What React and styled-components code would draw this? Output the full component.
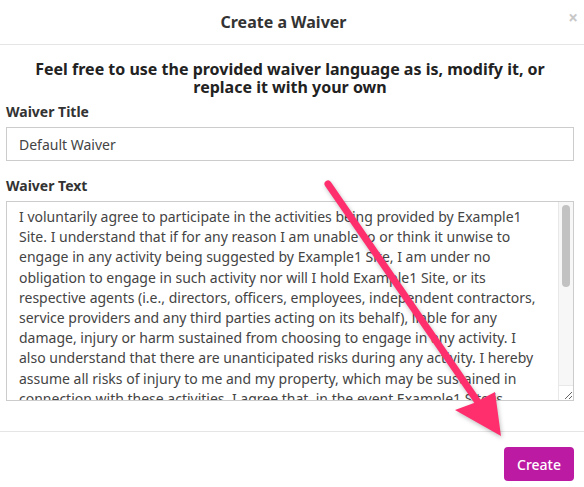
import React from 'react';
import styled, { createGlobalStyle } from 'styled-components';

const GlobalStyle = createGlobalStyle`
    html, body {
        margin: 0;
        padding: 0;
        background: #fff;
    }
    body {
        font-family: "Noto Sans", "Open Sans", sans-serif;
        color: #333;
    }
`;

const WAIVER_TEXT = 'I voluntarily agree to participate in the activities being provided by Example1 Site. I understand that if for any reason I am unable to or think it unwise to engage in any activity being suggested by Example1 Site, I am under no obligation to engage in such activity nor will I hold Example1 Site, or its respective agents (i.e., directors, officers, employees, independent contractors, service providers and any third parties acting on its behalf), liable for any damage, injury or harm sustained from choosing to engage in any activity. I also understand that there are unanticipated risks during any activity. I hereby assume all risks of injury to me and my property, which may be sustained in connection with these activities. I agree that, in the event Example1 Site is found liable for any damages, such liability shall be limited to the amount paid for the activity.';

const Modal = styled.div`
    position: relative;
    width: 584px;
    height: 487px;
    display: flex;
    flex-direction: column;
    background: #fff;
    overflow: hidden;
`;

const Header = styled.div`
    position: relative;
    height: 45px;
    display: flex;
    align-items: center;
    justify-content: center;
    padding-right: 17px;
    border-bottom: 1px solid #e5e5e5;
    box-sizing: border-box;
`;

const Title = styled.h4`
    margin: 0;
    font-size: 16px;
    font-weight: 700;
    color: #333;
`;

const Close = styled.span`
    position: absolute;
    right: 6px;
    top: 9px;
    font-size: 17px;
    font-weight: 700;
    color: #c8c8c8;
    line-height: 1;
`;

const Body = styled.div`
    flex: 1;
    padding: 15px 10px 0 6px;
    display: flex;
    flex-direction: column;
`;

const Lead = styled.h3`
    margin: 0 0 6px;
    font-size: 16px;
    font-weight: 700;
    line-height: 18px;
    text-align: center;
    color: #222;
`;

const Label = styled.label`
    display: block;
    font-size: 14px;
    line-height: 19px;
    font-weight: 700;
    color: #333;
    margin-bottom: 6px;
`;

const TextInput = styled.input`
    display: block;
    width: 100%;
    height: 34px;
    box-sizing: border-box;
    border: 1px solid #ccc;
    border-radius: 0;
    padding: 0 12px;
    font-family: "Noto Sans", "Open Sans", sans-serif;
    font-size: 14px;
    color: #444;
    margin-bottom: 15px;
    outline: none;
`;

const TextFrame = styled.div`
    display: flex;
    height: 200px;
    box-sizing: border-box;
    border: 1px solid #ccc;
`;

const TextArea = styled.textarea`
    flex: 1;
    min-width: 0;
    border: none;
    padding: 5px 20px 5px 12px;
    font-family: "Noto Sans", "Open Sans", sans-serif;
    font-size: 14px;
    line-height: 20.2px;
    color: #444;
    outline: none;
    resize: none;
    overflow: hidden;
`;

const ScrollColumn = styled.div`
    width: 14px;
    display: flex;
    flex-direction: column;
    background: #f7f7f7;
    border-left: 1px solid #e8e8e8;
`;

const Thumb = styled.div`
    height: 82px;
    margin: 3px 3px 0;
    border-radius: 4px;
    background: #c2c2c2;
`;

const Resizer = styled.div`
    margin-top: auto;
    height: 14px;
    background: #fff;
    border-top: 1px solid #e8e8e8;
    display: flex;
    align-items: flex-end;
    justify-content: flex-end;
`;

const Footer = styled.div`
    height: 56px;
    box-sizing: border-box;
    border-top: 1px solid #e5e5e5;
    display: flex;
    align-items: flex-start;
    justify-content: flex-end;
    padding: 15px 10px 0 0;
    margin-top: auto;
`;

const Button = styled.button`
    height: 34px;
    padding: 0 13px;
    border: none;
    border-radius: 4px;
    background: #bd1aa3;
    color: #fff;
    font-family: "Noto Sans", "Open Sans", sans-serif;
    font-size: 14px;
    font-weight: 500;
`;

const Annotation = styled.svg`
    position: absolute;
    left: 0;
    top: 0;
    pointer-events: none;
    filter: drop-shadow(1px 2px 2px rgba(0, 0, 0, 0.25));
`;

const App = () => (
    <>
        <GlobalStyle />
        <Modal>
            <Header>
                <Title>Create a Waiver</Title>
                <Close>×</Close>
            </Header>
            <Body>
                <Lead>
                    Feel free to use the provided waiver language as is, modify it, or
                    <br />
                    replace it with your own
                </Lead>
                <Label>Waiver Title</Label>
                <TextInput defaultValue="Default Waiver" />
                <Label>Waiver Text</Label>
                <TextFrame>
                    <TextArea defaultValue={WAIVER_TEXT} />
                    <ScrollColumn>
                        <Thumb />
                        <Resizer>
                            <svg width="10" height="10" viewBox="0 0 10 10">
                                <path d="M2 9 L9 2 M6 9 L9 6" stroke="#666" strokeWidth="1" />
                            </svg>
                        </Resizer>
                    </ScrollColumn>
                </TextFrame>
            </Body>
            <Footer>
                <Button>Create</Button>
            </Footer>
            <Annotation width="584" height="487" viewBox="0 0 584 487">
                <line x1="328" y1="184" x2="480" y2="405" stroke="#ff2f6e" strokeWidth="7" strokeLinecap="round" />
                <path d="M501 436 L455 410 L474 403 L495 392 Z" fill="#ff2f6e" />
            </Annotation>
        </Modal>
    </>
);

export default App;
